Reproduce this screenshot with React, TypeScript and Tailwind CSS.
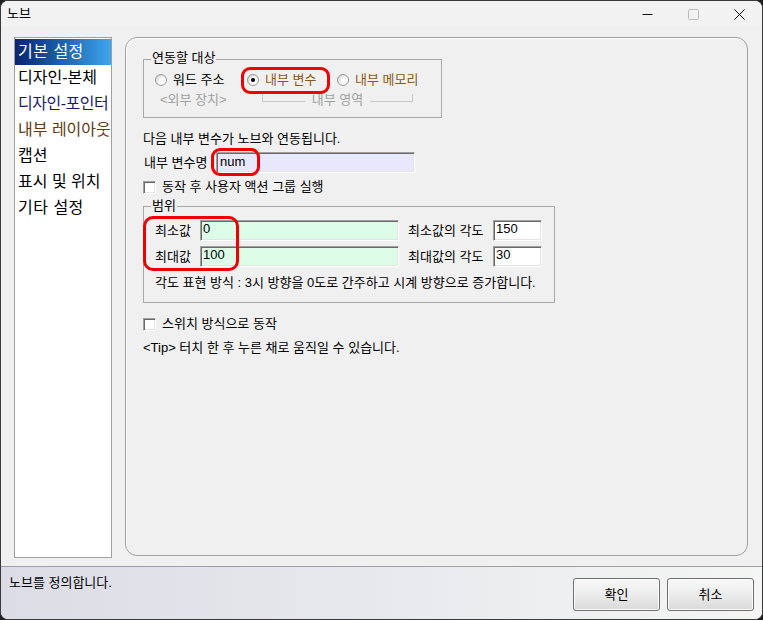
import React from "react";

function Radio({ checked }: { checked?: boolean }) {
  return (
    <svg width="12" height="12" viewBox="0 0 12 12" className="shrink-0">
      <defs>
        <radialGradient id={checked ? "rg1" : "rg0"} cx="0.65" cy="0.65" r="0.7">
          <stop offset="0" stopColor="#ffffff" />
          <stop offset="0.6" stopColor="#f4f4f4" />
          <stop offset="1" stopColor="#cfcfcf" />
        </radialGradient>
      </defs>
      <circle cx="6" cy="6" r="5.5" fill={`url(#${checked ? "rg1" : "rg0"})`} stroke="#9a9a9a" strokeWidth="1" />
      {checked && <circle cx="6" cy="6" r="2" fill="#000000" />}
    </svg>
  );
}

function Check() {
  return (
    <div className="w-[13px] h-[13px] shrink-0 bg-white border border-t-[#a0a0a0] border-l-[#a0a0a0] border-r-[#ffffff] border-b-[#ffffff] shadow-[inset_1px_1px_0_#696969,inset_-1px_-1px_0_#e3e3e3]" />
  );
}

const items = [
  { t: "기본 설정", c: "text-white tracking-[0.5px]", sel: true },
  { t: "디자인-본체", c: "text-black" },
  { t: "디자인-포인터", c: "text-[#1c1c64] tracking-[-0.5px]" },
  { t: "내부 레이아웃", c: "text-[#5e3a12]" },
  { t: "캡션", c: "text-black" },
  { t: "표시 및 위치", c: "text-black" },
  { t: "기타 설정", c: "text-black tracking-[0.5px]" },
];

export default function App() {
  return (
    <div className="relative w-[763px] h-[620px] bg-[#202020] font-['Liberation_Sans','Noto_Sans_CJK_KR',sans-serif] text-[13px] leading-[16px] text-black">
      <div className="flex flex-col w-full h-full rounded-[8px] border border-[#3a3a3a] bg-[#f0f0f0] overflow-hidden">
        {/* Title bar */}
        <div className="flex h-[26px] shrink-0 items-center justify-between bg-[#f2f2f2]">
          <div className="pl-[6px]">노브</div>
          <div className="flex h-full">
            <div className="w-[46px] h-full flex items-center justify-center">
              <svg width="11" height="11" viewBox="0 0 11 11">
                <line x1="0.5" y1="5.5" x2="10.5" y2="5.5" stroke="#111" strokeWidth="1" />
              </svg>
            </div>
            <div className="w-[46px] h-full flex items-center justify-center">
              <svg width="11" height="11" viewBox="0 0 11 11">
                <rect x="0.5" y="0.5" width="10" height="10" rx="1" fill="none" stroke="#bdbdbd" strokeWidth="1" />
              </svg>
            </div>
            <div className="w-[46px] h-full flex items-center justify-center">
              <svg width="11" height="11" viewBox="0 0 11 11">
                <line x1="0.5" y1="0.5" x2="10.5" y2="10.5" stroke="#111" strokeWidth="1" />
                <line x1="10.5" y1="0.5" x2="0.5" y2="10.5" stroke="#111" strokeWidth="1" />
              </svg>
            </div>
          </div>
        </div>

        {/* Body */}
        <div className="flex h-[539px] shrink-0 pt-[10px] pl-[13px] gap-[13px]">
          {/* Left list */}
          <div className="w-[98px] h-[521px] bg-white border border-[#a0a0a0] pt-[1px] text-[16px] overflow-hidden">
            {items.map((it) => (
              <div
                key={it.t}
                className={`h-[26px] leading-[26px] px-[3px] whitespace-nowrap ${it.c} ${
                  it.sel ? "bg-linear-to-r from-[#0a2470] to-[#3ea6ee]" : ""
                }`}
              >
                {it.t}
              </div>
            ))}
          </div>

          {/* Panel */}
          <div className="w-[623px] h-[519px] rounded-[12px] border border-[#a0a0a0] shadow-[inset_1px_1px_0_#ffffff] pl-[17px] pt-[21px] flex flex-col items-start">
            {/* Group 1 */}
            <div className="relative w-[299px] h-[59px] border border-[#a8a8a8] pt-[12px]">
              <span className="absolute left-[7px] top-[-10px] px-[1px] bg-[#f0f0f0] whitespace-nowrap">연동할 대상</span>
              <div className="flex h-[16px] pl-[11px] items-center">
                <div className="flex items-center w-[92px] whitespace-nowrap">
                  <Radio />
                  <span className="ml-[6px]">워드 주소</span>
                </div>
                <div className="flex items-center w-[90px] whitespace-nowrap">
                  <Radio checked />
                  <span className="ml-[6px] text-[#905812]">내부 변수</span>
                </div>
                <div className="flex items-center whitespace-nowrap">
                  <Radio />
                  <span className="ml-[6px] text-[#905812]">내부 메모리</span>
                </div>
              </div>
              <div className="flex h-[16px] mt-[4px] pl-[16px]">
                <div className="w-[102px] text-[#a0a0a0] whitespace-nowrap">&lt;외부 장치&gt;</div>
                <div className="relative w-[151px] h-[8px] mt-[2px] border-l border-r border-b border-[#c8c8c8]">
                  <span className="absolute left-1/2 -translate-x-1/2 top-[-2px] px-[7px] bg-[#f0f0f0] text-[#a0a0a0] whitespace-nowrap">
                    내부 영역
                  </span>
                </div>
              </div>
            </div>

            <div className="mt-[13px] h-[16px] whitespace-nowrap">다음 내부 변수가 노브와 연동됩니다.</div>

            <div className="mt-[5px] flex h-[21px] items-center">
              <div className="w-[73px] pl-[1px] whitespace-nowrap">내부 변수명</div>
              <div className="w-[199px] h-[21px] bg-[#e8e8fc] pl-[3px] pt-[1px] border border-t-[#a0a0a0] border-l-[#a0a0a0] border-r-[#ffffff] border-b-[#ffffff] shadow-[inset_1px_1px_0_#696969,inset_-1px_-1px_0_#e3e3e3]">
                num
              </div>
            </div>

            <div className="mt-[6px] flex h-[16px] items-center whitespace-nowrap">
              <Check />
              <span className="ml-[6px]">동작 후 사용자 액션 그룹 실행</span>
            </div>

            {/* Group 2 */}
            <div className="relative mt-[11px] w-[412px] h-[97px] border border-[#a8a8a8] pt-[13px] pl-[11px]">
              <span className="absolute left-[7px] top-[-9px] px-[1px] bg-[#f0f0f0]">범위</span>
              <div className="flex h-[21px] items-center whitespace-nowrap">
                <div className="w-[45px]">최소값</div>
                <div className="w-[199px] h-[21px] bg-[#dcfce8] pl-[2px] border border-t-[#a0a0a0] border-l-[#a0a0a0] border-r-[#ffffff] border-b-[#ffffff] shadow-[inset_1px_1px_0_#696969,inset_-1px_-1px_0_#e3e3e3]">
                  0
                </div>
                <div className="ml-[9px] w-[85px]">최소값의 각도</div>
                <div className="w-[49px] h-[21px] bg-white pl-[2px] border border-t-[#a0a0a0] border-l-[#a0a0a0] border-r-[#ffffff] border-b-[#ffffff] shadow-[inset_1px_1px_0_#696969,inset_-1px_-1px_0_#e3e3e3]">
                  150
                </div>
              </div>
              <div className="mt-[5px] flex h-[21px] items-center whitespace-nowrap">
                <div className="w-[45px]">최대값</div>
                <div className="w-[199px] h-[21px] bg-[#dcfce8] pl-[2px] border border-t-[#a0a0a0] border-l-[#a0a0a0] border-r-[#ffffff] border-b-[#ffffff] shadow-[inset_1px_1px_0_#696969,inset_-1px_-1px_0_#e3e3e3]">
                  100
                </div>
                <div className="ml-[9px] w-[85px]">최대값의 각도</div>
                <div className="w-[49px] h-[21px] bg-white pl-[2px] border border-t-[#a0a0a0] border-l-[#a0a0a0] border-r-[#ffffff] border-b-[#ffffff] shadow-[inset_1px_1px_0_#696969,inset_-1px_-1px_0_#e3e3e3]">
                  30
                </div>
              </div>
              <div className="mt-[8px] h-[16px] whitespace-nowrap">
                각도 표현 방식 : 3시 방향을 0도로 간주하고 시계 방향으로 증가합니다.
              </div>
            </div>

            <div className="mt-[13px] flex h-[16px] items-center whitespace-nowrap">
              <Check />
              <span className="ml-[6px]">스위치 방식으로 동작</span>
            </div>

            <div className="mt-[8px] h-[16px] whitespace-nowrap">&lt;Tip&gt; 터치 한 후 누른 채로 움직일 수 있습니다.</div>
          </div>
        </div>

        {/* Footer */}
        <div className="flex-1 flex justify-between border-t border-[#a0a0a0] bg-linear-to-r from-[#dcdce6] to-[#f4f6f4]">
          <div className="pl-[8px] pt-[8px] whitespace-nowrap">노브를 정의합니다.</div>
          <div className="flex gap-[7px] pt-[11px] pr-[8px]">
            <div className="w-[87px] h-[33px] flex items-center justify-center rounded-[3px] border border-[#707070] bg-linear-to-b from-[#f8f8f8] via-[#ececec] to-[#d9d9d9] shadow-[inset_0_0_0_1px_#fbfbfb]">
              확인
            </div>
            <div className="w-[87px] h-[33px] flex items-center justify-center rounded-[3px] border border-[#707070] bg-linear-to-b from-[#f8f8f8] via-[#ececec] to-[#d9d9d9] shadow-[inset_0_0_0_1px_#fbfbfb]">
              취소
            </div>
          </div>
        </div>
      </div>

      {/* Red annotation boxes */}
      <div className="absolute left-[241px] top-[67px] w-[89px] h-[27px] rounded-[9px] border-[3px] border-[#f00000]" />
      <div className="absolute left-[211px] top-[148px] w-[49px] h-[28px] rounded-[9px] border-[3px] border-[#f00000]" />
      <div className="absolute left-[143px] top-[216px] w-[96px] h-[55px] rounded-[10px] border-[3px] border-[#f00000]" />
    </div>
  );
}
